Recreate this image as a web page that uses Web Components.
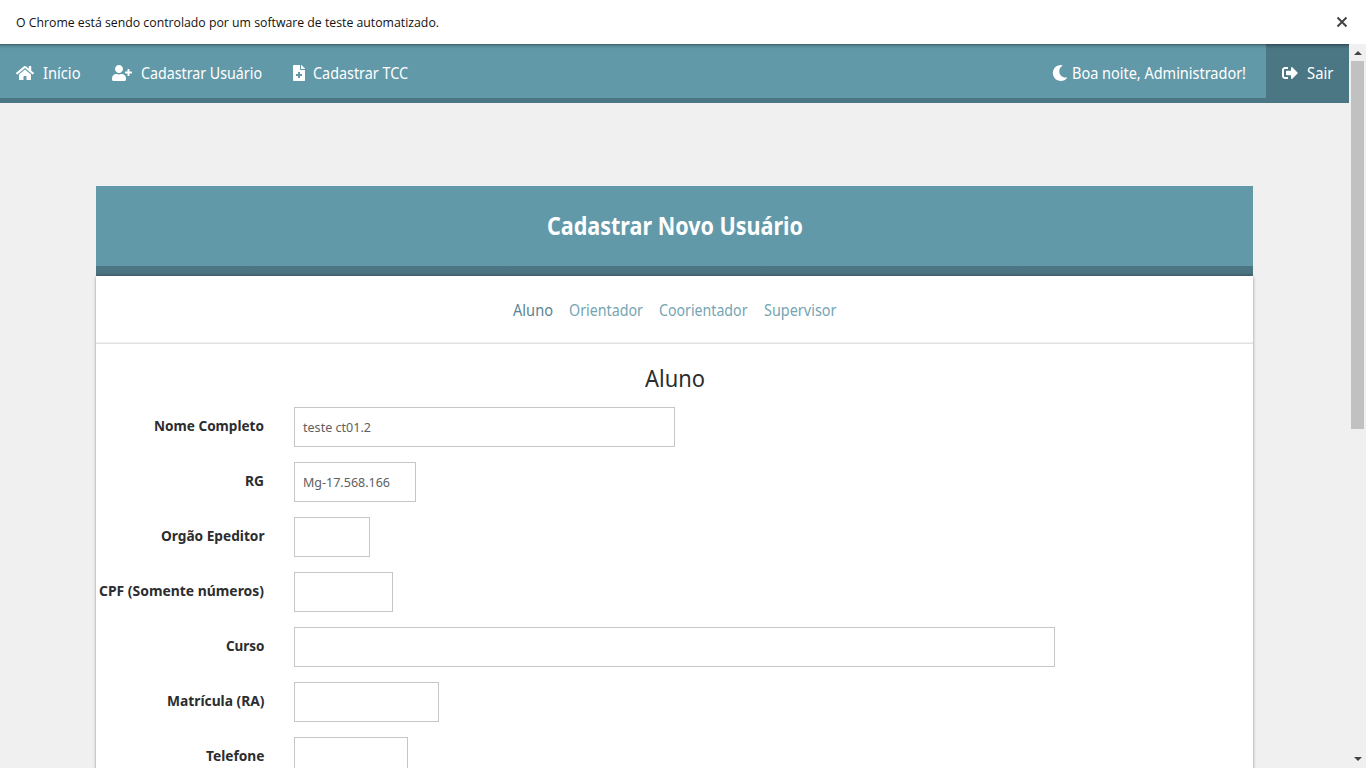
<!DOCTYPE html>
<html lang="pt-BR">
<head>
<meta charset="utf-8">
<title>Cadastrar Novo Usuário</title>
<style>
html,body{margin:0;height:100%;overflow:hidden}
body{font-family:"Noto Sans","Open Sans",sans-serif;background:#f0f0f0}
</style>
</head>
<body>
<app-window></app-window>
<script>
const define = (name, html, setup) => customElements.define(name, class extends HTMLElement {
  connectedCallback() {
    if (this.shadowRoot) return;
    const t = document.createElement('template');
    t.innerHTML = html;
    this.attachShadow({mode: 'open'}).append(t.content.cloneNode(true));
    if (setup) setup(this, this.shadowRoot);
  }
});

/* One line of text condensed or widened to the width given in "w". */
define('fit-text', `<style>
:host{display:block;flex:none;white-space:nowrap}
span{display:inline-block;transform-origin:0 50%}
</style><span><slot></slot></span>`, (host, root) => {
  const w = +host.getAttribute('w');
  host.style.width = w + 'px';
  const s = root.querySelector('span');
  s.style.transform = 'scaleX(' + w / s.getBoundingClientRect().width + ')';
});

const icons = {
  home: [576, 'M280.37 148.26L96 300.11V464a16 16 0 0 0 16 16l112.06-.29a16 16 0 0 0 15.92-16V368a16 16 0 0 1 16-16h64a16 16 0 0 1 16 16v95.64a16 16 0 0 0 16 16.05L464 480a16 16 0 0 0 16-16V300L295.67 148.26a12.19 12.19 0 0 0-15.3 0zM571.6 251.47L488 182.56V44.05a12 12 0 0 0-12-12h-56a12 12 0 0 0-12 12v72.61L318.47 43a48 48 0 0 0-61 0L4.34 251.47a12 12 0 0 0-1.6 16.9l25.5 31A12 12 0 0 0 45.15 301l235.22-193.74a12.19 12.19 0 0 1 15.3 0L530.9 301a12 12 0 0 0 16.9-1.6l25.5-31a12 12 0 0 0-1.7-16.93z'],
  user: [640, 'M624 208h-64v-64c0-8.800-7.200-16-16-16h-32c-8.800 0-16 7.200-16 16v64h-64c-8.800 0-16 7.200-16 16v32c0 8.800 7.200 16 16 16h64v64c0 8.800 7.200 16 16 16h32c8.800 0 16-7.200 16-16v-64h64c8.800 0 16-7.200 16-16v-32c0-8.800-7.200-16-16-16zm-400 48c70.700 0 128-57.300 128-128S294.700 0 224 0 96 57.300 96 128s57.300 128 128 128zm89.600 32h-16.700c-22.200 10.200-46.900 16-72.900 16s-50.600-5.800-72.900-16h-16.700C60.200 288 0 348.200 0 422.400V464c0 26.500 21.500 48 48 48h352c26.500 0 48-21.500 48-48v-41.600c0-74.200-60.200-134.400-134.400-134.400z'],
  file: [384, 'M377 105L279.100 7c-4.500-4.500-10.600-7-17-7H256v128h128v-6.100c0-6.300-2.500-12.400-7-16.900zm-153 31V0H24C10.700 0 0 10.700 0 24v464c0 13.300 10.700 24 24 24h336c13.300 0 24-10.700 24-24V160H248c-13.200 0-24-10.800-24-24zm64 160v48c0 4.400-3.600 8-8 8h-56v56c0 4.400-3.600 8-8 8h-48c-4.400 0-8-3.600-8-8v-56h-56c-4.400 0-8-3.600-8-8v-48c0-4.400 3.600-8 8-8h56v-56c0-4.400 3.600-8 8-8h48c4.400 0 8 3.600 8 8v56h56c4.400 0 8 3.600 8 8z'],
  moon: [512, 'M283.211 512c78.962 0 151.079-35.925 198.857-94.792 7.068-8.708-.639-21.430-11.562-19.350-124.203 23.654-238.262-71.576-238.262-196.954 0-72.222 38.662-138.635 101.498-174.394 9.686-5.512 7.250-20.197-3.756-22.230A258.156 258.156 0 0 0 283.211 0c-141.309 0-256 114.511-256 256 0 141.309 114.511 256 256 256z'],
  exit: [512, 'M497 273L329 441c-15 15-41 4.500-41-17v-96H152c-13.300 0-24-10.700-24-24v-96c0-13.300 10.700-24 24-24h136V88c0-21.400 25.900-32 41-17l168 168c9.300 9.400 9.300 24.600 0 34zM192 436v-40c0-6.600-5.400-12-12-12H96c-17.700 0-32-14.300-32-32V160c0-17.700 14.300-32 32-32h84c6.600 0 12-5.400 12-12V76c0-6.600-5.400-12-12-12H96c-53 0-96 43-96 96v192c0 53 43 96 96 96h84c6.600 0 12-5.400 12-12z']
};
define('fa-icon', `<style>:host{display:block;flex:none;height:16px}svg{display:block;height:16px;fill:currentColor}</style><svg><path/></svg>`, (host, root) => {
  const [w, d] = icons[host.getAttribute('name')];
  const svg = root.querySelector('svg');
  svg.setAttribute('viewBox', `0 0 ${w} 512`);
  svg.style.width = w / 32 + 'px';
  root.querySelector('path').setAttribute('d', d);
});

define('info-bar', `<style>
:host{display:flex;justify-content:space-between;align-items:center;box-sizing:border-box;height:44px;padding:0 18px 0 16px;background:#fff;color:#111;font:12px/20px "Open Sans","Noto Sans",sans-serif}
fit-text{padding-top:2px}
svg{display:block;width:12px;height:12px}
</style><fit-text w="423">O Chrome está sendo controlado por um software de teste automatizado.</fit-text>
<svg viewBox="0 0 12 12"><path d="M1.500 1.500l9 9M10.500 1.500l-9 9" stroke="#444" stroke-width="2"/></svg>`);

define('nav-item', `<style>
:host{display:flex;flex:none;align-items:center;gap:var(--gap,8.600px);height:59px;box-sizing:border-box;padding:0 16px 1px;font-size:15.500px;line-height:24px}
</style><div class="text"><slot></slot></div>`, (host, root) => {
  const icon = document.createElement('fa-icon');
  icon.setAttribute('name', host.getAttribute('icon'));
  root.insertBefore(icon, root.querySelector('.text'));
});

define('nav-bar', `<style>
:host{display:flex;box-sizing:border-box;height:59px;background:linear-gradient(rgba(0,0,0,.38),rgba(0,0,0,.12) 2px,transparent 5px),linear-gradient(#6299a9 54px,#4b7683 54px);color:#fff}
.space{flex:1}
.hello{--gap:4px;padding-right:20px}
.out{background:linear-gradient(rgba(0,0,0,.38),rgba(0,0,0,.12) 2px,transparent 5px),#4b7683}
</style>
<nav-item icon="home"><fit-text w="37.500">Início</fit-text></nav-item>
<nav-item icon="user"><fit-text w="121">Cadastrar Usuário</fit-text></nav-item>
<nav-item icon="file" style="padding-left:15px"><fit-text w="95">Cadastrar TCC</fit-text></nav-item>
<div class="space"></div>
<nav-item class="hello" icon="moon"><fit-text w="174">Boa noite, Administrador!</fit-text></nav-item>
<nav-item class="out" icon="exit"><fit-text w="26.400">Sair</fit-text></nav-item>`);

define('scroll-bar', `<style>
:host{display:flex;flex-direction:column;align-items:center;flex:none;width:17px;background:#f0f0f0}
svg{display:block;width:17px;height:17px;flex:none}
.thumb{width:13px;height:368px;background:#c1c1c1}
.rest{flex:1}
</style><svg viewBox="0 0 17 17"><path d="M5 11h8L9 7z" fill="#444"/></svg><div class="thumb"></div><div class="rest"></div><svg viewBox="0 0 17 17"><path d="M5 6h8l-4 4z" fill="#444"/></svg>`);

define('tab-list', `<style>
:host{display:flex;justify-content:center;align-items:center;gap:16px;height:68px;padding-top:1px;box-sizing:border-box;border-bottom:1px solid #e2e2e2;color:#75a5b3;font-size:15.500px;line-height:24px;box-shadow:inset 0 -1px #f0f0f0}
.on{color:#5a8492}
</style><fit-text class="on" w="40">Aluno</fit-text><fit-text w="74">Orientador</fit-text><fit-text w="88.500">Coorientador</fit-text><fit-text w="72.500">Supervisor</fit-text>`);

define('form-field', `<style>
:host{display:flex;gap:30px;height:40px;margin-bottom:15px}
.label{width:168px;display:flex;justify-content:flex-end;font-weight:700;font-size:15px;line-height:37px;color:#2b2d2f}
.box{box-sizing:border-box;height:40px;border:1px solid #c6c6c6;background:#fff;padding:0 8px;font-size:13.200px;line-height:39px;color:#606060}
</style><div class="label"><slot name="label"></slot></div><div class="box"><slot></slot></div>`, (host, root) => {
  root.querySelector('.box').style.width = host.getAttribute('size') + 'px';
});

define('user-form', `<style>
:host{display:block;width:1157px;margin:83px 0 0 96px}
header{box-sizing:border-box;height:90px;display:flex;justify-content:center;background:linear-gradient(#6299a9 80px,#4b7683 80px,#4a7480 87px,#42656f);color:#fff;font-weight:700;font-size:24.200px;line-height:80px}
.card{background:#fff;height:700px;box-shadow:0 1px 3px rgba(0,0,0,.4)}
h2{margin:0;height:63px;display:flex;justify-content:center;font-weight:400;font-size:22.800px;line-height:69px;color:#2b2d2f}
</style>
<header><fit-text w="256">Cadastrar Novo Usuário</fit-text></header>
<div class="card"><tab-list></tab-list><h2><fit-text w="60">Aluno</fit-text></h2>
<form-field size="381"><fit-text slot="label" w="110">Nome Completo</fit-text><fit-text w="68">teste ct01.2</fit-text></form-field>
<form-field size="122"><fit-text slot="label" w="19">RG</fit-text><fit-text w="87">Mg-17.568.166</fit-text></form-field>
<form-field size="76"><fit-text slot="label" w="103.500">Orgão Epeditor</fit-text></form-field>
<form-field size="99"><fit-text slot="label" w="165">CPF (Somente números)</fit-text></form-field>
<form-field size="761"><fit-text slot="label" w="38.500">Curso</fit-text></form-field>
<form-field size="145"><fit-text slot="label" w="97.500">Matrícula (RA)</fit-text></form-field>
<form-field size="114"><fit-text slot="label" w="58.500">Telefone</fit-text></form-field>
</div>`);

define('app-window', `<style>
:host{display:flex;flex-direction:column;width:1366px;height:768px;overflow:hidden}
.view{display:flex;flex:1;min-height:0}
.page{width:1349px;overflow:hidden;background:#f0f0f0}
</style><info-bar></info-bar><div class="view"><div class="page"><nav-bar></nav-bar><user-form></user-form></div><scroll-bar></scroll-bar></div>`);
</script>
</body>
</html>
